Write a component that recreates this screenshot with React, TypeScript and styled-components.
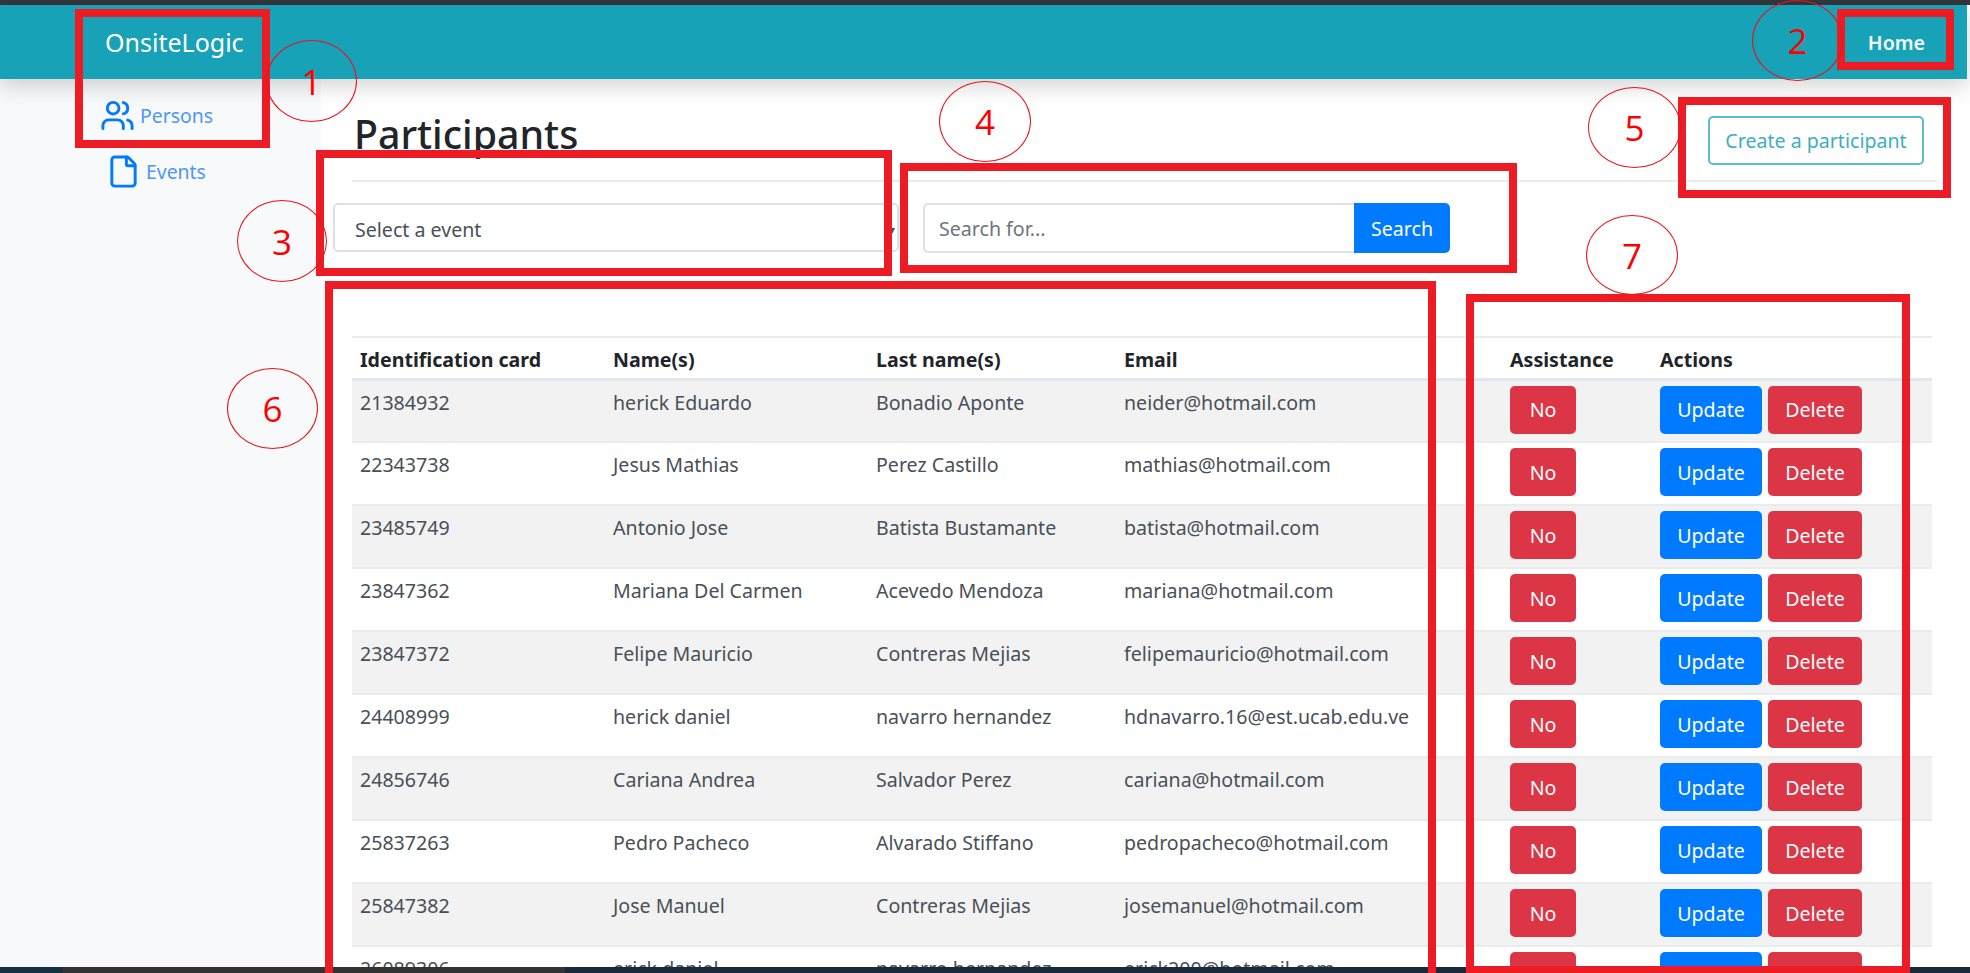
import { createGlobalStyle, styled } from "styled-components";
import { Users, File } from "lucide-react";

const GlobalStyle = createGlobalStyle`
  html, body {
    margin: 0;
    padding: 0;
    background: #fff;
    font-family: "Noto Sans", "Open Sans", sans-serif;
  }
`;

const people = [
  ["21384932", "herick Eduardo", "Bonadio Aponte", "neider@hotmail.com"],
  ["22343738", "Jesus Mathias", "Perez Castillo", "mathias@hotmail.com"],
  ["23485749", "Antonio Jose", "Batista Bustamante", "batista@hotmail.com"],
  ["23847362", "Mariana Del Carmen", "Acevedo Mendoza", "mariana@hotmail.com"],
  ["23847372", "Felipe Mauricio", "Contreras Mejias", "felipemauricio@hotmail.com"],
  ["24408999", "herick daniel", "navarro hernandez", "hdnavarro.16@est.ucab.edu.ve"],
  ["24856746", "Cariana Andrea", "Salvador Perez", "cariana@hotmail.com"],
  ["25837263", "Pedro Pacheco", "Alvarado Stiffano", "pedropacheco@hotmail.com"],
  ["25847382", "Jose Manuel", "Contreras Mejias", "josemanuel@hotmail.com"],
  ["26089306", "erick daniel", "navarro hernandez", "erick200@hotmail.com"],
];

const boxes = [
  { x: 75, y: 9, w: 195, h: 139 },
  { x: 1837, y: 9, w: 117, h: 61 },
  { x: 316, y: 150, w: 576, h: 126 },
  { x: 900, y: 163, w: 617, h: 110 },
  { x: 1678, y: 97, w: 273, h: 101 },
  { x: 325, y: 281, w: 1111, h: 720 },
  { x: 1466, y: 294, w: 444, h: 680 },
];

const circles = [
  { n: 1, x: 266, y: 40, w: 91, h: 82 },
  { n: 2, x: 1752, y: 0, w: 91, h: 81 },
  { n: 3, x: 237, y: 200, w: 90, h: 82 },
  { n: 4, x: 939, y: 81, w: 92, h: 81 },
  { n: 5, x: 1588, y: 87, w: 93, h: 81 },
  { n: 6, x: 227, y: 368, w: 91, h: 81 },
  { n: 7, x: 1586, y: 215, w: 92, h: 80 },
];

const Page = styled.div`
  position: relative;
  display: flex;
  flex-direction: column;
  width: 1970px;
  height: 973px;
  overflow: hidden;
  background: #fff;
`;

const WindowEdge = styled.div`
  flex: 0 0 5px;
  background: #33363b;
`;

const Navbar = styled.header`
  flex: 0 0 74px;
  margin-right: 3px;
  display: flex;
  align-items: center;
  justify-content: space-between;
  padding: 0 42px 0 105px;
  background: #17a2b8;
  box-shadow: 0 8px 20px rgba(0, 0, 0, 0.16);
  position: relative;
  z-index: 1;
`;

const Brand = styled.div`
  font-size: 25px;
  color: #fff;
`;

const HomeLink = styled.div`
  font-size: 19.6px;
  font-weight: 600;
  color: #f0f8fa;
`;

const Body = styled.div`
  flex: 1;
  display: flex;
  min-height: 0;
`;

const Sidebar = styled.nav`
  flex: 0 0 321px;
  display: flex;
  flex-direction: column;
  gap: 21px;
  padding: 19px 0 0 100px;
  box-sizing: border-box;
  background: #f8f9fa;
`;

const SideLink = styled.div<{ $indent: number }>`
  display: flex;
  align-items: center;
  gap: 5px;
  padding-left: ${(p) => p.$indent}px;
  font-size: 19.4px;
  color: #4f97f5;
  svg {
    color: #007bff;
  }
`;

const Content = styled.main`
  flex: 1;
  min-width: 0;
  padding: 0 33px 0 31px;
  overflow: hidden;
`;

const TitleRow = styled.div`
  display: flex;
  align-items: flex-start;
  justify-content: space-between;
  height: 103px;
  padding: 0 13px 0 2px;
  border-bottom: 2px solid #e9ecef;
  box-sizing: border-box;
`;

const Title = styled.h1`
  margin: 27px 0 0;
  font-size: 39.3px;
  line-height: 56px;
  font-weight: 500;
  color: #212529;
`;

const CreateButton = styled.button`
  margin-top: 37px;
  width: 216px;
  height: 49px;
  padding: 0;
  border: 2px solid #5dbccb;
  border-radius: 5px;
  background: #fff;
  font: inherit;
  font-size: 19.6px;
  color: #3eaec0;
`;

const Filters = styled.div`
  display: flex;
  margin: 21px 0 0 -19px;
`;

const EventSelect = styled.div`
  width: 566px;
  height: 49px;
  display: flex;
  align-items: center;
  justify-content: space-between;
  box-sizing: border-box;
  padding: 3px 2px 0 20px;
  border: 2px solid #dde1e6;
  border-radius: 5px;
  font-size: 19.6px;
  color: #495057;
`;

const SelectArrow = styled.span`
  font-size: 12px;
`;

const SearchGroup = styled.div`
  display: flex;
  width: 527px;
  height: 50px;
  margin-left: 24px;
`;

const SearchInput = styled.input`
  flex: 1;
  min-width: 0;
  box-sizing: border-box;
  padding: 0 14px;
  border: 2px solid #dde1e6;
  border-right: none;
  border-radius: 5px 0 0 5px;
  font: inherit;
  font-size: 19.6px;
  &::placeholder {
    color: #6c757d;
  }
`;

const SearchButton = styled.button`
  width: 96px;
  padding: 0;
  border: none;
  border-radius: 0 5px 5px 0;
  background: #007bff;
  font: inherit;
  font-size: 19.6px;
  color: #fff;
`;

const Table = styled.table`
  width: 1580px;
  margin-top: 83px;
  border-collapse: collapse;
  table-layout: fixed;
  font-size: 19.6px;
  color: #495057;
`;

const HeadCell = styled.th<{ $width: number }>`
  width: ${(p) => p.$width}px;
  height: 42px;
  padding: 3px 8px 0;
  box-sizing: border-box;
  border-top: 2px solid #e9ecef;
  border-bottom: 3px solid #e3e6ea;
  text-align: left;
  font-weight: 700;
  color: #212529;
`;

const Row = styled.tr<{ $striped: boolean }>`
  height: 63px;
  background: ${(p) => (p.$striped ? "#f2f2f2" : "#fff")};
`;

const Cell = styled.td`
  padding: 8px 8px 0;
  box-sizing: border-box;
  vertical-align: top;
  border-bottom: 2px solid #e9ecef;
  white-space: nowrap;
`;

const ButtonCell = styled(Cell)`
  padding-top: 5px;
`;

const ActionButton = styled.button<{ $color: string; $width: number }>`
  width: ${(p) => p.$width}px;
  height: 48px;
  margin-right: 6px;
  padding: 0;
  border: none;
  border-radius: 5px;
  background: ${(p) => p.$color};
  font: inherit;
  font-size: 19.6px;
  color: #fff;
`;

const BottomBar = styled.div`
  position: absolute;
  left: 0;
  right: 0;
  bottom: 0;
  height: 6px;
  display: flex;
  z-index: 2;
`;

const BarPart = styled.div<{ $grow: number; $color: string }>`
  flex: ${(p) => p.$grow} 0 0;
  background: ${(p) => p.$color};
`;

const RedBox = styled.div<{ $x: number; $y: number; $w: number; $h: number }>`
  position: absolute;
  left: ${(p) => p.$x}px;
  top: ${(p) => p.$y}px;
  width: ${(p) => p.$w}px;
  height: ${(p) => p.$h}px;
  box-sizing: border-box;
  border: 8px solid #ed1c24;
  z-index: 3;
`;

const Circle = styled.div<{ $x: number; $y: number; $w: number; $h: number }>`
  position: absolute;
  left: ${(p) => p.$x}px;
  top: ${(p) => p.$y}px;
  width: ${(p) => p.$w}px;
  height: ${(p) => p.$h}px;
  box-sizing: border-box;
  display: flex;
  align-items: center;
  justify-content: center;
  border: 1px solid #e8141c;
  border-radius: 50%;
  font-family: "Open Sans", sans-serif;
  font-size: 35px;
  color: #f00;
  z-index: 4;
`;

export default function App() {
  return (
    <Page>
      <GlobalStyle />
      <WindowEdge />
      <Navbar>
        <Brand>OnsiteLogic</Brand>
        <HomeLink>Home</HomeLink>
      </Navbar>
      <Body>
        <Sidebar>
          <SideLink $indent={0}>
            <Users size={35} strokeWidth={2} />
            Persons
          </SideLink>
          <SideLink $indent={6}>
            <File size={35} strokeWidth={2} />
            Events
          </SideLink>
        </Sidebar>
        <Content>
          <TitleRow>
            <Title>Participants</Title>
            <CreateButton>Create a participant</CreateButton>
          </TitleRow>
          <Filters>
            <EventSelect>
              Select a event
              <SelectArrow>▾</SelectArrow>
            </EventSelect>
            <SearchGroup>
              <SearchInput placeholder="Search for..." />
              <SearchButton>Search</SearchButton>
            </SearchGroup>
          </Filters>
          <Table>
            <thead>
              <tr>
                <HeadCell $width={253}>Identification card</HeadCell>
                <HeadCell $width={263}>Name(s)</HeadCell>
                <HeadCell $width={248}>Last name(s)</HeadCell>
                <HeadCell $width={386}>Email</HeadCell>
                <HeadCell $width={150}>Assistance</HeadCell>
                <HeadCell $width={280}>Actions</HeadCell>
              </tr>
            </thead>
            <tbody>
              {people.map((p, i) => (
                <Row key={p[0]} $striped={i % 2 === 0}>
                  {p.map((v) => (
                    <Cell key={v}>{v}</Cell>
                  ))}
                  <ButtonCell>
                    <ActionButton $color="#dc3545" $width={66}>No</ActionButton>
                  </ButtonCell>
                  <ButtonCell>
                    <ActionButton $color="#007bff" $width={102}>Update</ActionButton>
                    <ActionButton $color="#dc3545" $width={94}>Delete</ActionButton>
                  </ButtonCell>
                </Row>
              ))}
            </tbody>
          </Table>
        </Content>
      </Body>
      <BottomBar>
        <BarPart $grow={63} $color="#17323f" />
        <BarPart $grow={502} $color="#333333" />
        <BarPart $grow={1405} $color="#17293a" />
      </BottomBar>
      {boxes.map((b) => (
        <RedBox key={b.x} $x={b.x} $y={b.y} $w={b.w} $h={b.h} />
      ))}
      {circles.map((c) => (
        <Circle key={c.n} $x={c.x} $y={c.y} $w={c.w} $h={c.h}>
          {c.n}
        </Circle>
      ))}
    </Page>
  );
}
